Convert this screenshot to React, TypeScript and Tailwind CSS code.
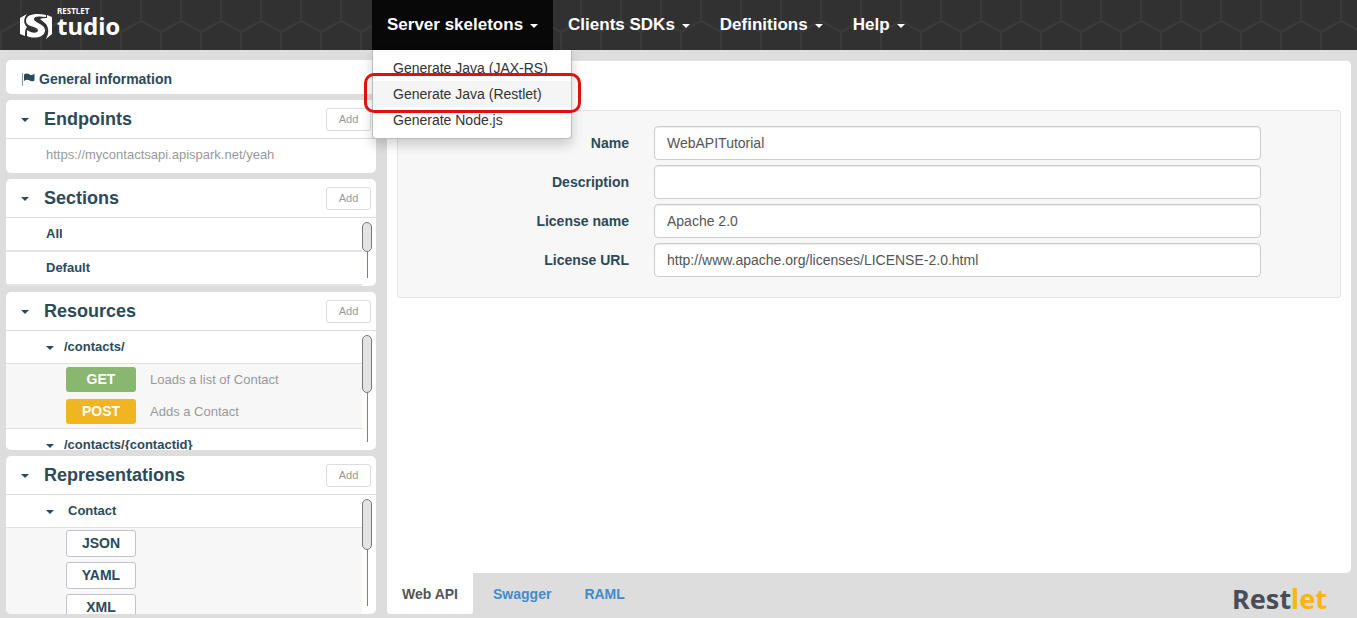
import React, { useState } from "react";
import clsx from "clsx";

function Caret({ className = "" }: { className?: string }) {
  return (
    <svg aria-hidden="true" viewBox="0 0 8 4" className={clsx("h-1 w-2 shrink-0 fill-current", className)}>
      <path d="M0 0h8L4 4z" />
    </svg>
  );
}

function HexPattern() {
  return (
    <svg aria-hidden="true" className="absolute inset-0 h-full w-full">
      <defs>
        <pattern id="hex" width="40" height="64" patternUnits="userSpaceOnUse">
          <path d="M21 -2V21M1 32L21 21L41 32M1 32V52M-19 21L1 32M41 32V52" fill="none" stroke="#3a3a3a" strokeWidth="2" />
        </pattern>
      </defs>
      <rect width="100%" height="100%" fill="url(#hex)" />
    </svg>
  );
}

function StudioLogo() {
  return (
    <a href="#home" className="relative flex h-[50px] w-[372px] shrink-0 items-start pl-5 text-white">
      <svg aria-hidden="true" viewBox="0 0 32 26" className="mt-[13px] h-[26px] w-8 fill-white">
        <path d="M0 5L7 1C4 5 3 9 6 13L7 14C5 16 5 19 5 23L0 21Z" />
        <path d="M26 2C16 0 6 1 6 8C6 14 17 13 18 17C18 21 11 20 7 17V23C13 26 24 25 25 18C26 11 14 10 14 6C14 3 20 3 26 4Z" />
        <path d="M27 2L32 4V21L26 26C29 20 29 16 26 11C24 9 22 8 20 6C22 5 24 5 27 5Z" />
      </svg>
      <span className="flex flex-col pl-[5px] pt-1.5 font-['Noto_Sans',sans-serif] font-bold">
        <span className="text-[8px] leading-[10px]">RESTLET</span>
        <span className="text-2xl leading-[20px]">tudio</span>
      </span>
    </a>
  );
}

const generators = ["Generate Java (JAX-RS)", "Generate Java (Restlet)", "Generate Node.js"];

function Header() {
  const [open, setOpen] = useState(true);
  return (
    <header className="relative z-10 flex h-[50px] bg-[#313131]">
      <HexPattern />
      <StudioLogo />
      <nav className="relative flex text-[17px] font-bold text-white">
        <div className="relative">
          <button
            type="button"
            aria-expanded={open}
            onClick={() => setOpen(!open)}
            className="flex h-[50px] items-center gap-[7px] bg-[#080808] px-[15px]"
          >
            Server skeletons
            <Caret className="mt-0.5" />
          </button>
          {open && (
            <div className="absolute left-0 top-[50px] w-[200px] rounded-b border border-t-0 border-[#bbb] bg-white py-[5px] text-sm font-normal text-[#333] shadow-[0_6px_12px_rgba(0,0,0,0.18)]">
              {generators.map((name, i) => (
                <a key={name} href="#generate" className={clsx("block px-5 leading-[26px]", i === 1 && "bg-[#f5f5f5]")}>
                  {name}
                </a>
              ))}
              <div className="pointer-events-none absolute -left-[9px] top-[23px] h-10 w-[217px] rounded-[10px] border-3 border-[#e01010]" />
            </div>
          )}
        </div>
        {["Clients SDKs", "Definitions", "Help"].map((name) => (
          <button key={name} type="button" className="flex items-center gap-[7px] px-[15px]">
            {name}
            <Caret className="mt-0.5" />
          </button>
        ))}
      </nav>
    </header>
  );
}

function Section({
  title,
  className,
  children,
}: {
  title: string;
  className: string;
  children: React.ReactNode;
}) {
  return (
    <section className={clsx("flex flex-col overflow-hidden rounded-[5px] bg-white", className)}>
      <div className="flex h-[39px] shrink-0 items-center border-b border-[#ddd] pl-[15px] pr-[5px]">
        <Caret className="mt-0.5" />
        <h2 className="flex-1 pl-[15px] text-lg font-bold">{title}</h2>
        <button type="button" className="h-[23px] w-[45px] rounded-[3px] border border-[#ddd] text-[11px] text-[#999]">
          Add
        </button>
      </div>
      {children}
    </section>
  );
}

function ScrollArea({ thumb, children }: { thumb: string; children: React.ReactNode }) {
  return (
    <div className="flex min-h-0 flex-1">
      <div className="min-w-0 flex-1 overflow-hidden">{children}</div>
      <div aria-hidden="true" className="mr-1 flex w-[10px] shrink-0 flex-col items-center pb-2 pt-1">
        <div className={clsx("w-full shrink-0 rounded-[5px] border border-[#777] bg-[#e3e3e3]", thumb)} />
        <div className="w-px flex-1 bg-[#8a8072]" />
      </div>
    </div>
  );
}

function GroupRow({ label, className }: { label: string; className: string }) {
  return (
    <div className="flex h-[33px] items-center border-b border-[#e0e0e0] pl-10 text-[13px] font-bold">
      <Caret className="mt-0.5" />
      <span className={className}>{label}</span>
    </div>
  );
}

function Sidebar() {
  return (
    <aside className="flex w-[370px] shrink-0 flex-col gap-1.5">
      <a href="#general" className="flex h-[34px] items-center gap-1 rounded-[5px] bg-white pl-4 pt-1 text-sm font-bold">
        <svg aria-hidden="true" viewBox="0 0 13 13" className="h-[13px] w-[13px]">
          <path d="M.5 0V13" stroke="#8a9aa2" />
          <path d="M2 1.500C4 -.2 6 .5 7.500 1.500S10.500 2 12.500 .8V7.500C10.500 8.700 9 8.500 7.500 7.500S4 6.500 2 8Z" fill="#2b4a5a" />
        </svg>
        General information
      </a>
      <Section title="Endpoints" className="h-[73px]">
        <p className="pl-10 text-[13px] leading-[32px] text-[#999]">https://mycontactsapi.apispark.net/yeah</p>
      </Section>
      <Section title="Sections" className="h-[107px]">
        <ScrollArea thumb="h-[30px]">
          {["All", "Default"].map((name) => (
            <div key={name} className="h-[34px] border-b-2 border-[#e3e3e3] pl-10 text-[13px] font-bold leading-[32px]">
              {name}
            </div>
          ))}
        </ScrollArea>
      </Section>
      <Section title="Resources" className="h-[158px]">
        <ScrollArea thumb="h-[58px]">
          <GroupRow label="/contacts/" className="pl-[10px]" />
          <div className="flex flex-col gap-[7px] border-b border-[#e0e0e0] bg-[#f7f7f7] pb-1 pl-[60px] pt-[3px] text-[13px] text-[#999]">
            <div className="flex items-center gap-[14px]">
              <button type="button" className="h-[25px] w-[70px] rounded-[3px] bg-[#8ab76f] pb-0.5 text-sm font-bold text-white">
                GET
              </button>
              Loads a list of Contact
            </div>
            <div className="flex items-center gap-[14px]">
              <button type="button" className="h-[25px] w-[70px] rounded-[3px] bg-[#f2b522] pb-0.5 text-sm font-bold text-white">
                POST
              </button>
              Adds a Contact
            </div>
          </div>
          <GroupRow label="/contacts/{contactid}" className="pl-[10px]" />
        </ScrollArea>
      </Section>
      <Section title="Representations" className="h-[158px]">
        <ScrollArea thumb="h-[51px]">
          <GroupRow label="Contact" className="pl-[14px]" />
          <div className="flex flex-col gap-[5px] bg-[#f7f7f7] pl-[60px] pt-0.5">
            {["JSON", "YAML", "XML"].map((name) => (
              <button key={name} type="button" className="h-[27px] w-[70px] rounded-[3px] border border-[#bfc3d6] bg-white pb-0.5 text-sm font-bold">
                {name}
              </button>
            ))}
          </div>
        </ScrollArea>
      </Section>
    </aside>
  );
}

const fields = [
  { id: "name", label: "Name", value: "WebAPITutorial" },
  { id: "description", label: "Description", value: "" },
  { id: "license-name", label: "License name", value: "Apache 2.0" },
  { id: "license-url", label: "License URL", value: "http://www.apache.org/licenses/LICENSE-2.0.html" },
];

function Main() {
  return (
    <main className="flex min-w-0 flex-1 flex-col">
      <div className="flex-1 rounded-[5px] rounded-bl-none border-t border-[#e6e6e6] bg-white px-[10px] pt-[49px]">
        <form className="flex flex-col gap-[5px] rounded-[3px] border border-[#e3e3e3] bg-[#f7f7f7] pb-5 pr-[79px] pt-[15px]">
          {fields.map((f) => (
            <div key={f.id} className="grid grid-cols-[231fr_607fr] items-center gap-[25px] text-sm">
              <label htmlFor={f.id} className="text-right font-bold">
                {f.label}
              </label>
              <input
                id={f.id}
                defaultValue={f.value}
                className="h-[34px] w-full rounded border border-[#ccc] bg-white px-3 text-[#555] shadow-[inset_0_1px_1px_rgba(0,0,0,0.075)]"
              />
            </div>
          ))}
        </form>
      </div>
      <footer className="flex h-[41px] items-center text-sm font-bold text-[#428bca]">
        <a href="#web-api" className="flex h-full items-center rounded-b-[3px] bg-white px-[15px] text-[#555]">
          Web API
        </a>
        <a href="#swagger" className="px-5">
          Swagger
        </a>
        <a href="#raml" className="px-[13px]">
          RAML
        </a>
        <a href="#restlet" className="ml-auto pr-6 pt-2.5 font-['Noto_Sans',sans-serif] text-[27px] leading-[26px] text-[#4a4d57]">
          Rest<span className="text-[#fdb414]">let</span>
        </a>
      </footer>
    </main>
  );
}

export default function App() {
  return (
    <div className="flex min-h-screen flex-col bg-[#ddd] font-['Liberation_Sans',Arial,sans-serif] text-[#2b4a5a]">
      <Header />
      <div className="flex flex-1 gap-[11px] px-1.5 pb-1 pt-[10px]">
        <Sidebar />
        <Main />
      </div>
    </div>
  );
}
